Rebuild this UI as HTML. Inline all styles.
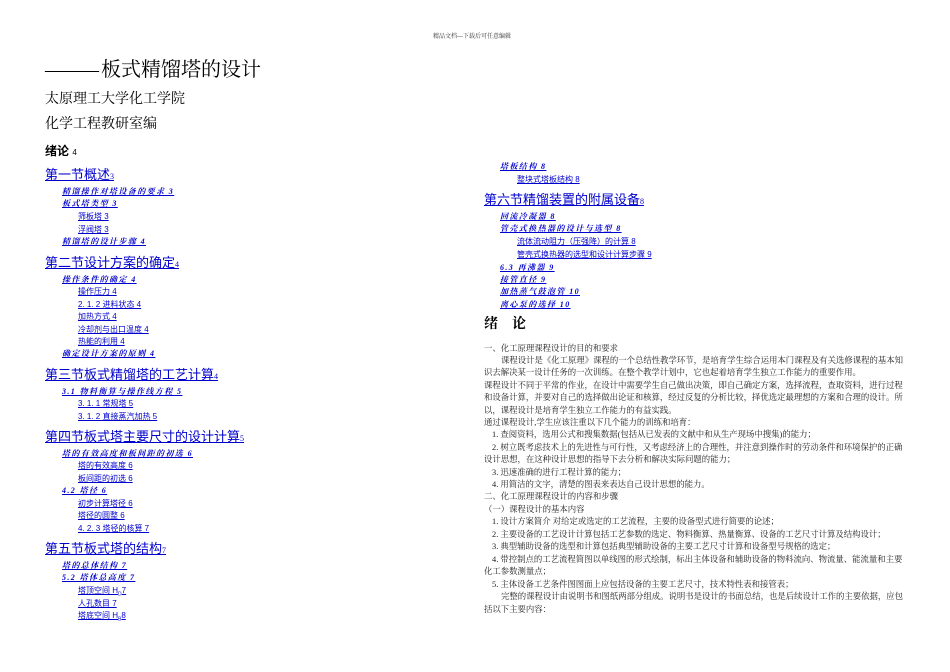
<!DOCTYPE html>
<html><head><meta charset="utf-8"><style>
html,body{margin:0;padding:0;background:#fff}
body{width:950px;height:672px;position:relative;overflow:hidden;font-family:"Liberation Serif","Noto Serif CJK SC","Noto Sans CJK SC",serif;color:#000}
.a{position:absolute;white-space:nowrap;line-height:1}
.h{font-family:"Liberation Sans","Noto Sans CJK SC",sans-serif;font-size:13px;color:#00c;text-decoration:underline}
.h small{font-size:8px;font-family:"Liberation Serif",serif}
.l2{font-size:8px;color:#00c;text-decoration:underline;font-weight:bold;font-style:italic;letter-spacing:1.4px}
.l3{font-size:8px;color:#00c;text-decoration:underline;font-family:"Liberation Sans","Noto Sans CJK SC",sans-serif}
.b{font-size:8.4px;color:#222}
</style></head><body>
<div class="a" style="left:433px;top:34px;font-size:6px;color:#333">精品文档---下载后可任意编辑</div>
<div class="a" style="left:45px;top:60px;font-size:20px"><span style="letter-spacing:-3px">———</span> 板式精馏塔的设计</div>
<div class="a" style="left:45px;top:93px;font-size:14px">太原理工大学化工学院</div>
<div class="a" style="left:45px;top:118px;font-size:14px">化学工程教研室编</div>
<div class="a" style="left:45px;top:145px;font-size:12px;font-weight:bold;font-family:'Liberation Sans','Noto Sans CJK SC',sans-serif">绪论 <span style="font-weight:normal;font-size:8px">4</span></div>

<div class="a h" style="left:45px;top:168px">第一节概述<small>3</small></div>
<div class="a l2" style="left:62px;top:188px">精馏操作对塔设备的要求 3</div>
<div class="a l2" style="left:62px;top:200px">板式塔类型 3</div>
<div class="a l3" style="left:78px;top:213px">筛板塔 3</div>
<div class="a l3" style="left:78px;top:226px">浮阀塔 3</div>
<div class="a l2" style="left:62px;top:238px">精馏塔的设计步骤 4</div>

<div class="a h" style="left:45px;top:256px">第二节设计方案的确定<small>4</small></div>
<div class="a l2" style="left:62px;top:276px">操作条件的确定 4</div>
<div class="a l3" style="left:78px;top:288px">操作压力 4</div>
<div class="a l3" style="left:78px;top:301px">2. 1. 2 进料状态 4</div>
<div class="a l3" style="left:78px;top:313px">加热方式 4</div>
<div class="a l3" style="left:78px;top:326px">冷却剂与出口温度 4</div>
<div class="a l3" style="left:78px;top:338px">热能的利用 4</div>
<div class="a l2" style="left:62px;top:350px">确定设计方案的原则 4</div>

<div class="a h" style="left:45px;top:368px">第三节板式精馏塔的工艺计算<small>4</small></div>
<div class="a l2" style="left:62px;top:388px">3.1 物料衡算与操作线方程 5</div>
<div class="a l3" style="left:78px;top:400px">3. 1. 1 常规塔 5</div>
<div class="a l3" style="left:78px;top:413px">3. 1. 2 直接蒸汽加热 5</div>

<div class="a h" style="left:45px;top:430px">第四节板式塔主要尺寸的设计计算<small>5</small></div>
<div class="a l2" style="left:62px;top:450px">塔的有效高度和板间距的初选 6</div>
<div class="a l3" style="left:78px;top:462px">塔的有效高度 6</div>
<div class="a l3" style="left:78px;top:475px">板间距的初选 6</div>
<div class="a l2" style="left:62px;top:487px">4.2 塔径 6</div>
<div class="a l3" style="left:78px;top:500px">初步计算塔径 6</div>
<div class="a l3" style="left:78px;top:512px">塔径的圆整 6</div>
<div class="a l3" style="left:78px;top:525px">4. 2. 3 塔径的核算 7</div>

<div class="a h" style="left:45px;top:542px">第五节板式塔的结构<small>7</small></div>
<div class="a l2" style="left:62px;top:562px">塔的总体结构 7</div>
<div class="a l2" style="left:62px;top:574px">5.2 塔体总高度 7</div>
<div class="a l3" style="left:78px;top:587px">塔顶空间 H<sub style="font-size:5px">D</sub>7</div>
<div class="a l3" style="left:78px;top:600px">人孔数目 7</div>
<div class="a l3" style="left:78px;top:612px">塔底空间 H<sub style="font-size:5px">B</sub>8</div>

<div class="a l2" style="left:500px;top:163px">塔板结构 8</div>
<div class="a l3" style="left:517px;top:176px">整块式塔板结构 8</div>
<div class="a h" style="left:484px;top:193px">第六节精馏装置的附属设备<small>8</small></div>
<div class="a l2" style="left:500px;top:213px">回流冷凝器 8</div>
<div class="a l2" style="left:500px;top:225px">管壳式换热器的设计与选型 8</div>
<div class="a l3" style="left:517px;top:238px">流体流动阻力（压强降）的计算 8</div>
<div class="a l3" style="left:517px;top:251px">管壳式换热器的选型和设计计算步骤 9</div>
<div class="a l2" style="left:500px;top:264px">6.3 再沸器 9</div>
<div class="a l2" style="left:500px;top:276px">接管直径 9</div>
<div class="a l2" style="left:500px;top:288px">加热蒸气鼓泡管 10</div>
<div class="a l2" style="left:500px;top:301px">离心泵的选择 10</div>

<div class="a" style="left:484px;top:318px;font-size:14px;font-weight:bold;letter-spacing:14px">绪论</div>

<div class="a b" style="left:484px;top:345px">一、化工原理课程设计的目的和要求</div>
<div class="a b" style="left:501px;top:357px">课程设计是《化工原理》课程的一个总结性教学环节，是培育学生综合运用本门课程及有关选修课程的基本知</div>
<div class="a b" style="left:484px;top:369px">识去解决某一设计任务的一次训练。在整个教学计划中，它也起着培育学生独立工作能力的重要作用。</div>
<div class="a b" style="left:484px;top:382px">课程设计不同于平常的作业，在设计中需要学生自己做出决策，即自己确定方案，选择流程，查取资料，进行过程</div>
<div class="a b" style="left:484px;top:394px">和设备计算，并要对自己的选择做出论证和核算，经过反复的分析比较，择优选定最理想的方案和合理的设计。所</div>
<div class="a b" style="left:484px;top:407px">以，课程设计是培育学生独立工作能力的有益实践。</div>
<div class="a b" style="left:484px;top:419px">通过课程设计,学生应该注重以下几个能力的训练和培育：</div>
<div class="a b" style="left:492px;top:431px">1. 查阅资料，选用公式和搜集数据(包括从已发表的文献中和从生产现场中搜集)的能力；</div>
<div class="a b" style="left:492px;top:444px">2. 树立既考虑技术上的先进性与可行性，又考虑经济上的合理性，并注意到操作时的劳动条件和环境保护的正确</div>
<div class="a b" style="left:484px;top:456px">设计思想，在这种设计思想的指导下去分析和解决实际问题的能力；</div>
<div class="a b" style="left:492px;top:469px">3. 迅速准确的进行工程计算的能力；</div>
<div class="a b" style="left:492px;top:481px">4. 用简洁的文字，清楚的图表来表达自己设计思想的能力。</div>
<div class="a b" style="left:484px;top:493px">二、化工原理课程设计的内容和步骤</div>
<div class="a b" style="left:484px;top:506px">（一）课程设计的基本内容</div>
<div class="a b" style="left:492px;top:518px">1. 设计方案简介 对给定或选定的工艺流程，主要的设备型式进行简要的论述；</div>
<div class="a b" style="left:492px;top:531px">2. 主要设备的工艺设计计算包括工艺参数的选定、物料衡算、热量衡算、设备的工艺尺寸计算及结构设计；</div>
<div class="a b" style="left:492px;top:543px">3. 典型辅助设备的选型和计算包括典型辅助设备的主要工艺尺寸计算和设备型号规格的选定；</div>
<div class="a b" style="left:492px;top:556px">4. 带控制点的工艺流程简图以单线图的形式绘制，标出主体设备和辅助设备的物料流向、物流量、能流量和主要</div>
<div class="a b" style="left:484px;top:568px">化工参数测量点；</div>
<div class="a b" style="left:492px;top:581px">5. 主体设备工艺条件图图面上应包括设备的主要工艺尺寸，技术特性表和接管表；</div>
<div class="a b" style="left:501px;top:593px">完整的课程设计由说明书和图纸两部分组成。说明书是设计的书面总结，也是后续设计工作的主要依据，应包</div>
<div class="a b" style="left:484px;top:606px">括以下主要内容：</div>
</body></html>
